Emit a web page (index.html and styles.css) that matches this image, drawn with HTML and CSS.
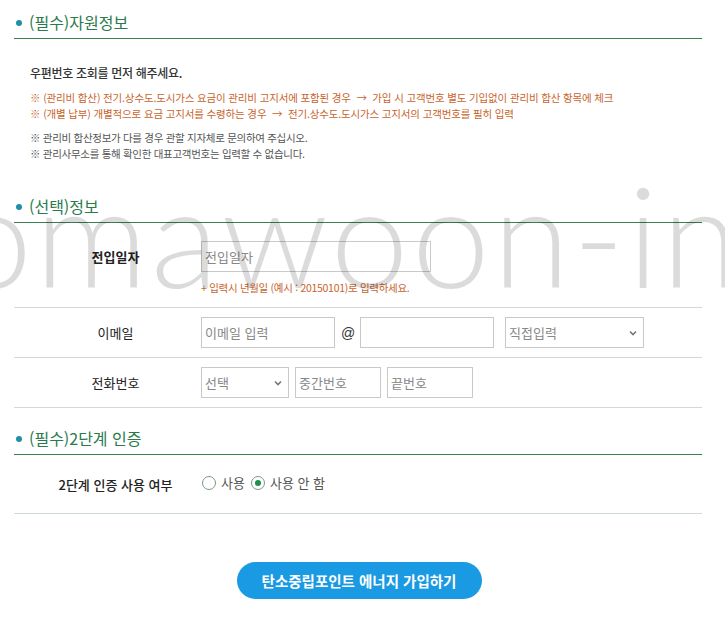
FILE: index.html
```html
<!DOCTYPE html>
<html lang="ko">

<head>
    <meta charset="UTF-8">
    <meta name="viewport" content="width=device-width, initial-scale=1.0">
    <title>탄소중립포인트 에너지 가입</title>
    <link rel="stylesheet" href="styles.css">
</head>

<body>
    <div class="page">
        <!-- 필수 자원정보 -->
        <h3 class="section-title">(필수)자원정보</h3>
        <div class="notice">
            <p class="notice-main">우편번호 조회를 먼저 해주세요.</p>
            <p class="notice-warn">※ (관리비 합산) 전기.상수도.도시가스 요금이 관리비 고지서에 포함된 경우 &nbsp;→&nbsp; 가입 시 고객번호 별도 기입없이 관리비 합산 항목에 체크</p>
            <p class="notice-warn">※ (개별 납부) 개별적으로 요금 고지서를 수령하는 경우 &nbsp;→&nbsp; 전기.상수도.도시가스 고지서의 고객번호를 필히 입력</p>
            <p class="notice-info first">※ 관리비 합산정보가 다를 경우 관할 지자체로 문의하여 주십시오.</p>
            <p class="notice-info">※ 관리사무소를 통해 확인한 대표고객번호는 입력할 수 없습니다.</p>
        </div>

        <!-- 선택 정보 -->
        <h3 class="section-title">(선택)정보</h3>
        <div class="form-row tall">
            <div class="row-label bold">전입일자</div>
            <div class="row-field">
                <input type="text" class="input w-230" placeholder="전입일자">
                <p class="hint">+ 입력시 년월일 (예시 : 20150101)로 입력하세요.</p>
            </div>
        </div>
        <div class="form-row">
            <div class="row-label">이메일</div>
            <div class="row-field inline">
                <input type="text" class="input w-134" placeholder="이메일 입력">
                <span class="at">@</span>
                <input type="text" class="input w-134">
                <div class="select-box w-139 ml-5">
                    <select class="select">
                        <option>직접입력</option>
                    </select>
                    <svg class="chevron" width="8" height="6" viewBox="0 0 8 6"><path d="M1 1.5 L4 4.5 L7 1.5" fill="none" stroke="#777" stroke-width="1.6"/></svg>
                </div>
            </div>
        </div>
        <div class="form-row">
            <div class="row-label">전화번호</div>
            <div class="row-field inline">
                <div class="select-box w-88">
                    <select class="select">
                        <option>선택</option>
                    </select>
                    <svg class="chevron" width="8" height="6" viewBox="0 0 8 6"><path d="M1 1.5 L4 4.5 L7 1.5" fill="none" stroke="#777" stroke-width="1.6"/></svg>
                </div>
                <input type="text" class="input w-86" placeholder="중간번호">
                <input type="text" class="input w-86" placeholder="끝번호">
            </div>
        </div>

        <!-- 2단계 인증 -->
        <h3 class="section-title spaced">(필수)2단계 인증</h3>
        <div class="form-row auth">
            <div class="row-label semibold">2단계 인증 사용 여부</div>
            <div class="row-field inline radios">
                <label class="radio"><span class="radio-dot"></span>사용</label>
                <label class="radio"><span class="radio-dot checked"></span>사용 안 함</label>
            </div>
        </div>

        <div class="actions">
            <button type="button" class="btn-join">탄소중립포인트 에너지 가입하기</button>
        </div>
    </div>

    <div class="watermark">omawoon-inf</div>
</body>

</html>
```

FILE: styles.css
```css
body {
    margin: 0;
    background-color: #fff;
    font-family: "Noto Sans CJK KR", "Noto Sans", sans-serif;
    color: #333;
    position: relative;
    overflow: hidden;
    height: 624px;
}

p {
    margin: 0;
}

.page {
    width: 688px;
    margin-left: 14px;
}

.section-title {
    position: relative;
    margin: 0;
    padding: 12px 0 5px 15px;
    font-size: 16px;
    line-height: 21px;
    font-weight: 400;
    color: #2a7a4c;
    border-bottom: 1px solid #3d7d55;
}

.section-title.spaced {
    margin-top: 8px;
}

.section-title::before {
    content: "";
    position: absolute;
    left: 2px;
    top: 20px;
    width: 6px;
    height: 6px;
    border-radius: 50%;
    background-color: #1e8fa6;
}

.notice {
    padding: 23px 0 22px 16px;
}

.notice-main {
    font-size: 12px;
    line-height: 22px;
    font-weight: 500;
    letter-spacing: -0.3px;
    color: #333;
    margin-bottom: 6px;
}

.notice-warn {
    font-size: 10.5px;
    line-height: 16px;
    color: #c8642c;
    letter-spacing: -0.15px;
}

.notice-info {
    font-size: 10.5px;
    line-height: 16px;
    color: #555;
    letter-spacing: -0.3px;
}

.notice-info.first {
    margin-top: 8px;
}

.form-row {
    display: flex;
    align-items: center;
    height: 49px;
    border-bottom: 1px solid #cfd8dc;
}

.form-row.tall {
    align-items: flex-start;
    height: 84px;
}

.form-row.tall .row-label {
    margin-top: 19px;
    line-height: 30px;
}

.form-row.tall .row-field {
    margin-top: 18px;
}

.form-row.auth {
    height: 58px;
}

.row-label {
    width: 187px;
    padding-left: 16px;
    box-sizing: border-box;
    text-align: center;
    font-size: 13px;
    color: #222;
}

.row-label.bold {
    font-weight: 700;
}

.row-label.semibold {
    font-weight: 500;
}

.row-field.inline {
    display: flex;
    align-items: center;
    gap: 6px;
}

.input,
.select {
    height: 31px;
    border: 1px solid #c9c9c9;
    padding: 0 3px;
    box-sizing: border-box;
    font-family: inherit;
    font-size: 13px;
    color: #333;
    background-color: #fff;
    border-radius: 0;
    outline: none;
}

.input::placeholder {
    color: #888;
}

.select {
    width: 100%;
    appearance: none;
    -webkit-appearance: none;
    color: #888;
}

.select-box {
    position: relative;
}

.chevron {
    position: absolute;
    right: 7px;
    top: 13px;
}

.w-230 { width: 230px; }
.w-134 { width: 134px; }
.w-139 { width: 139px; }
.w-88 { width: 88px; }
.w-86 { width: 86px; }
.ml-5 { margin-left: 5px; }

.at {
    width: 14px;
    margin-right: -1px;
    font-size: 14px;
    font-family: "Liberation Sans", sans-serif;
    color: #333;
}

.hint {
    margin-top: 8px;
    font-size: 10.5px;
    line-height: 16px;
    color: #c8642c;
    letter-spacing: -0.3px;
}

.radios {
    gap: 14px;
    padding-left: 1px;
    margin-top: -3px;
}

.radio {
    display: flex;
    align-items: center;
    gap: 5px;
    font-size: 13px;
    color: #555;
}

.radio-dot {
    width: 12px;
    height: 12px;
    border: 1px solid #7a9a86;
    border-radius: 50%;
    position: relative;
}

.radio-dot.checked::after {
    content: "";
    position: absolute;
    left: 3px;
    top: 3px;
    width: 6px;
    height: 6px;
    border-radius: 50%;
    background-color: #1f8f4a;
}

.actions {
    display: flex;
    justify-content: center;
    padding: 48px 0 0 2px;
}

.btn-join {
    width: 245px;
    height: 37px;
    border: none;
    border-radius: 19px;
    background-color: #1a9ae2;
    color: #fff;
    font-family: inherit;
    font-size: 14.5px;
    font-weight: 700;
    cursor: pointer;
}

.watermark {
    position: absolute;
    left: -46px;
    top: 150px;
    font-family: Lato, "DejaVu Sans", sans-serif;
    font-weight: 300;
    font-size: 140px;
    letter-spacing: 3px;
    white-space: nowrap;
    color: rgba(0, 0, 0, 0.14);
    pointer-events: none;
}
```
